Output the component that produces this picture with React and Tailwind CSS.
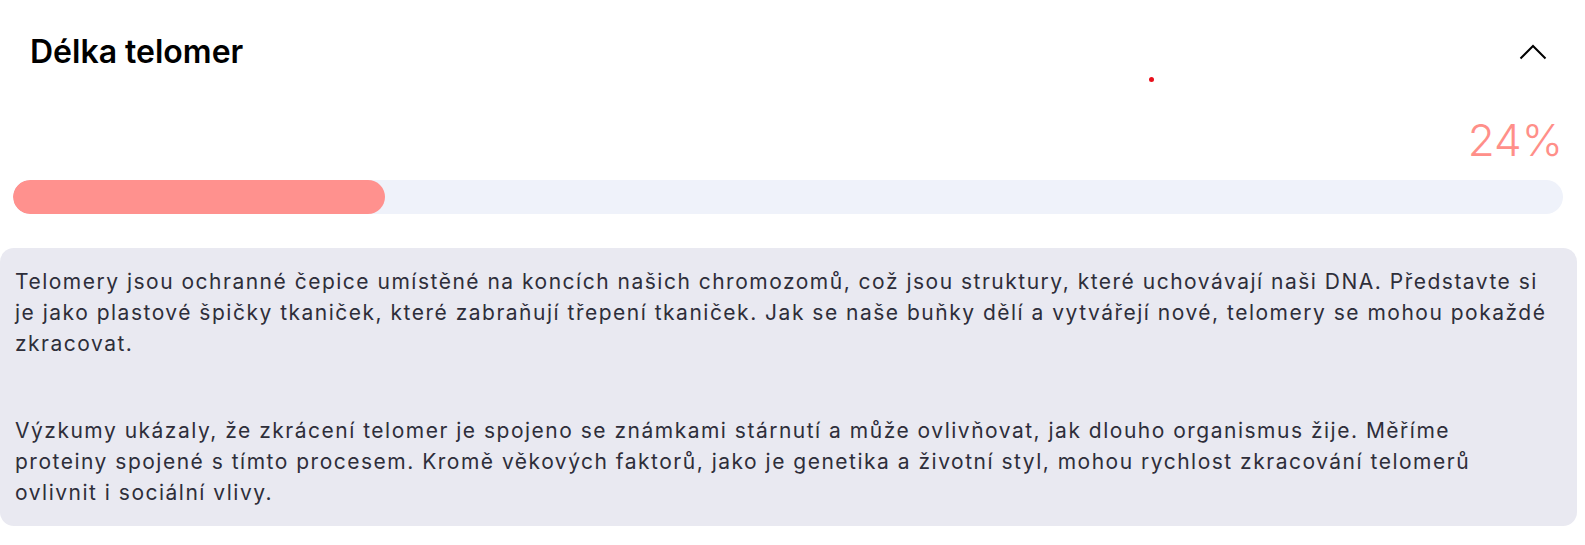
import React from 'react';

const Chevron = () => (
  <svg width="28" height="16" viewBox="0 0 28 16" fill="none" className="block">
    <path d="M1.5 14.5 L14 2 L26.5 14.5" stroke="#000" strokeWidth="2" />
  </svg>
);

export default function App() {
  const value = 24;
  return (
    <div className="w-[1585px] h-[545px] bg-white relative overflow-hidden" style={{ fontFamily: 'Inter, sans-serif' }}>
      {/* header */}
      <div className="flex items-center justify-between pl-[30px] pr-[38px] pt-[30px] h-[74px]">
        <h2 className="text-[32px] leading-none font-semibold text-black">
          Délka telomer
        </h2>
        <Chevron />
      </div>
      <span className="absolute left-[1149px] top-[77px] w-[5px] h-[5px] rounded-full bg-[#e8101c]" />

      {/* percentage */}
      <div className="flex justify-end pr-[22px] pt-[44px]">
        <span className="text-[44px] leading-none font-light text-[#ff8f89]">
          {value}%
        </span>
      </div>

      {/* bar */}
      <div className="ml-[13px] mr-[22px] mt-[18px] h-[34px] rounded-full bg-[#eff2fa] overflow-hidden">
        <div className="h-full rounded-full bg-[#ff918e]" style={{ width: `${value}%` }} />
      </div>

      {/* description */}
      <div className="mt-[34px] mr-[8px] rounded-[14px] bg-[#e9e9f1] px-[15px] pt-[18px] pb-[18px] text-[21px] leading-[31px] tracking-[1.5px] text-[#2e2e3a]">
        <p>
          Telomery jsou ochranné čepice umístěné na koncích našich chromozomů, což jsou struktury, které uchovávají naši DNA. Představte si je jako plastové špičky tkaniček, které zabraňují třepení tkaniček. Jak se naše buňky dělí a vytvářejí nové, telomery se mohou pokaždé zkracovat.
        </p>
        <p className="mt-[56px] mr-[12px]">
          Výzkumy ukázaly, že zkrácení telomer je spojeno se známkami stárnutí a může ovlivňovat, jak dlouho organismus žije. Měříme proteiny spojené s tímto procesem. Kromě věkových faktorů, jako je genetika a životní styl, mohou rychlost zkracování telomerů ovlivnit i sociální vlivy.
        </p>
      </div>
    </div>
  );
}
